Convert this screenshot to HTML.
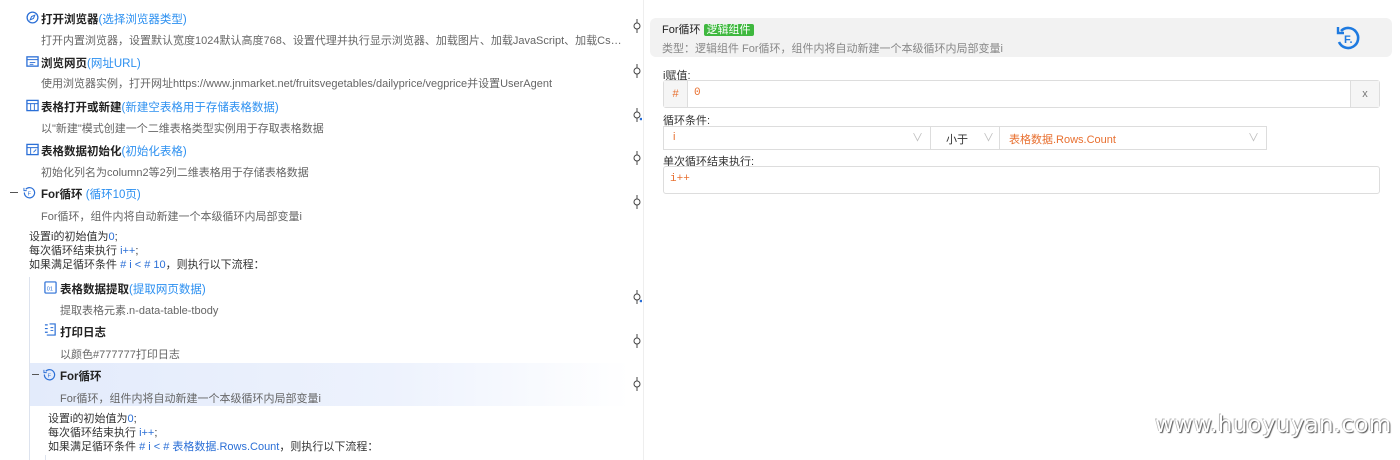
<!DOCTYPE html>
<html><head><meta charset="utf-8"><style>
*{margin:0;padding:0;box-sizing:border-box}
body{width:1400px;height:460px;overflow:hidden;background:#fff;font-family:"Liberation Sans","Noto Sans CJK SC",sans-serif;font-size:11px;color:#333;position:relative}
.a{position:absolute;white-space:nowrap}
.t{font-weight:bold;color:#222;font-size:11.5px}
.b{color:#2b8ff0;font-weight:normal}
.d{color:#666}
.bl{color:#2b6fd6}
.pin{position:absolute;left:632px;width:10px;height:14px}
.ic{position:absolute;width:13px;height:13px}
</style></head><body>
<div class="a" style="left:643px;top:0;width:1px;height:460px;background:#eee"></div>

<svg class="ic" style="left:26px;top:11px" viewBox="0 0 14 14"><circle cx="7" cy="7" r="5.8" fill="none" stroke="#2b6fd6" stroke-width="1.4"/><path d="M9.5 4.5L8 8 4.5 9.5 6 6z" fill="none" stroke="#2b6fd6" stroke-width="1.1"/></svg>
<div class="a t" style="left:41px;top:11px">打开浏览器<span class="b">(选择浏览器类型)</span></div>
<div class="a d" style="left:41px;top:32px;width:582px;overflow:hidden;text-overflow:ellipsis">打开内置浏览器，设置默认宽度1024默认高度768、设置代理并执行显示浏览器、加载图片、加载JavaScript、加载Css等图片视频等资源</div>

<svg class="ic" style="left:26px;top:55px" viewBox="0 0 14 14"><rect x="1" y="2" width="12" height="10" fill="none" stroke="#2b6fd6" stroke-width="1.4"/><path d="M1 5h12M4 8h6M4 10h4" stroke="#2b6fd6"/></svg>
<div class="a t" style="left:41px;top:55px">浏览网页<span class="b">(网址URL)</span></div>
<div class="a d" style="left:41px;top:75px">使用浏览器实例，打开网址https://www.jnmarket.net/fruitsvegetables/dailyprice/vegprice并设置UserAgent</div>

<svg class="ic" style="left:26px;top:99px" viewBox="0 0 14 14"><rect x="1" y="1.5" width="12" height="11" fill="none" stroke="#2b6fd6" stroke-width="1.4"/><path d="M1 5h12M5 5v7.5M9 5v7.5" stroke="#2b6fd6"/></svg>
<div class="a t" style="left:41px;top:99px">表格打开或新建<span class="b">(新建空表格用于存储表格数据)</span></div>
<div class="a d" style="left:41px;top:120px">以"新建"模式创建一个二维表格类型实例用于存取表格数据</div>

<svg class="ic" style="left:26px;top:143px" viewBox="0 0 14 14"><rect x="1" y="1.5" width="12" height="11" fill="none" stroke="#2b6fd6" stroke-width="1.4"/><path d="M1 5h12M5 5v7.5M8 10l3-3" stroke="#2b6fd6"/></svg>
<div class="a t" style="left:41px;top:143px">表格数据初始化<span class="b">(初始化表格)</span></div>
<div class="a d" style="left:41px;top:164px">初始化列名为column2等2列二维表格用于存储表格数据</div>

<div class="a" style="left:10px;top:192px;width:8px;height:1px;background:#555"></div>
<svg class="ic" style="left:23px;top:186px" viewBox="0 0 14 14"><path d="M3 3.5A5.5 5.5 0 1 1 1.5 7" fill="none" stroke="#2b6fd6" stroke-width="1.3"/><path d="M1 2v3h3" fill="none" stroke="#2b6fd6"/><text x="5" y="10" font-size="6" fill="#2b6fd6">F</text></svg>
<div class="a t" style="left:41px;top:186px">For循环 <span class="b">(循环10页)</span></div>
<div class="a d" style="left:41px;top:208px">For循环，组件内将自动新建一个本级循环内局部变量i</div>

<div class="a" style="left:29px;top:230px;line-height:14px;color:#333">设置i的初始值为<span class="bl">0</span>;<br>每次循环结束执行 <span class="bl">i++</span>;<br>如果满足循环条件 <span class="bl"># i &lt; # 10</span>，则执行以下流程：</div>

<div class="a" style="left:29px;top:277px;width:1px;height:183px;background:#dde3ee"></div>

<svg class="ic" style="left:44px;top:281px" viewBox="0 0 14 14"><rect x="1" y="1" width="12" height="12" rx="1" fill="none" stroke="#2b6fd6" stroke-width="1.3"/><text x="3" y="10" font-size="6" fill="#2b6fd6">01</text></svg>
<div class="a t" style="left:60px;top:281px">表格数据提取<span class="b">(提取网页数据)</span></div>
<div class="a d" style="left:60px;top:302px">提取表格元素.n-data-table-tbody</div>

<svg class="ic" style="left:44px;top:323px" viewBox="0 0 14 14"><path d="M1 2h3M1 6h3M1 10h3M3 13h9V1H6" fill="none" stroke="#2b6fd6" stroke-width="1.3"/><path d="M7 5h3M7 8h3" stroke="#2b6fd6"/></svg>
<div class="a t" style="left:60px;top:324px">打印日志</div>
<div class="a d" style="left:60px;top:346px">以颜色#777777打印日志</div>

<div class="a" style="left:30px;top:363px;width:600px;height:43px;background:linear-gradient(90deg,#e3ebfb 0%,#edf2fd 60%,#fff 100%)"></div>
<div class="a" style="left:32px;top:374px;width:7px;height:1px;background:#555"></div>
<svg class="ic" style="left:43px;top:368px" viewBox="0 0 14 14"><path d="M3 3.5A5.5 5.5 0 1 1 1.5 7" fill="none" stroke="#2b6fd6" stroke-width="1.3"/><path d="M1 2v3h3" fill="none" stroke="#2b6fd6"/><text x="5" y="10" font-size="6" fill="#2b6fd6">F</text></svg>
<div class="a t" style="left:60px;top:368px">For循环</div>
<div class="a d" style="left:60px;top:390px">For循环，组件内将自动新建一个本级循环内局部变量i</div>

<div class="a" style="left:48px;top:412px;line-height:14px;color:#333">设置i的初始值为<span class="bl">0</span>;<br>每次循环结束执行 <span class="bl">i++</span>;<br>如果满足循环条件 <span class="bl"># i &lt; # 表格数据.Rows.Count</span>，则执行以下流程：</div>
<div class="a" style="left:45px;top:455px;width:1px;height:5px;background:#dde3ee"></div>

<svg class="pin" style="top:19px" viewBox="0 0 10 14"><path d="M5 0v4M5 10v4" stroke="#444"/><circle cx="5" cy="7" r="3" fill="none" stroke="#444"/></svg>
<svg class="pin" style="top:64px" viewBox="0 0 10 14"><path d="M5 0v4M5 10v4" stroke="#444"/><circle cx="5" cy="7" r="3" fill="none" stroke="#444"/></svg>
<svg class="pin" style="top:108px" viewBox="0 0 10 14"><path d="M5 0v4M5 10v4" stroke="#444"/><circle cx="5" cy="7" r="3" fill="none" stroke="#444"/><circle cx="9" cy="11" r="1.3" fill="#2b6fd6"/></svg>
<svg class="pin" style="top:151px" viewBox="0 0 10 14"><path d="M5 0v4M5 10v4" stroke="#444"/><circle cx="5" cy="7" r="3" fill="none" stroke="#444"/></svg>
<svg class="pin" style="top:195px" viewBox="0 0 10 14"><path d="M5 0v4M5 10v4" stroke="#444"/><circle cx="5" cy="7" r="3" fill="none" stroke="#444"/></svg>
<svg class="pin" style="top:290px" viewBox="0 0 10 14"><path d="M5 0v4M5 10v4" stroke="#444"/><circle cx="5" cy="7" r="3" fill="none" stroke="#444"/><circle cx="9" cy="11" r="1.3" fill="#2b6fd6"/></svg>
<svg class="pin" style="top:334px" viewBox="0 0 10 14"><path d="M5 0v4M5 10v4" stroke="#444"/><circle cx="5" cy="7" r="3" fill="none" stroke="#444"/></svg>
<svg class="pin" style="top:377px" viewBox="0 0 10 14"><path d="M5 0v4M5 10v4" stroke="#444"/><circle cx="5" cy="7" r="3" fill="none" stroke="#444"/></svg>

<div class="a" style="left:650px;top:18px;width:742px;height:39px;background:#f2f2f2;border-radius:6px"></div>
<div class="a" style="left:662px;top:21px;color:#222">For循环 <span style="background:#3fb83f;color:#fff;padding:0 3px;border-radius:2px">逻辑组件</span></div>
<div class="a" style="left:662px;top:40px;color:#888">类型：逻辑组件 For循环，组件内将自动新建一个本级循环内局部变量i</div>
<svg class="a" style="left:1335px;top:24px" width="26" height="28" viewBox="0 0 26 28"><path d="M6 7A10 10 0 1 1 4 18" fill="none" stroke="#1e7ae0" stroke-width="2.6"/><path d="M3 3v6h6" fill="none" stroke="#1e7ae0" stroke-width="2.4"/><text x="9" y="19" font-size="11" font-weight="bold" fill="#1e7ae0" font-family="Liberation Sans">F.</text></svg>

<div class="a" style="left:663px;top:67px;color:#333">i赋值:</div>
<div class="a" style="left:663px;top:80px;width:717px;height:28px;border:1px solid #ddd;border-radius:3px;background:#fff"></div>
<div class="a" style="left:664px;top:81px;width:24px;height:26px;background:#f5f5f5;border-right:1px solid #ddd;color:#e87030;text-align:center;line-height:26px">#</div>
<div class="a" style="left:694px;top:87px;color:#e87030;font-family:'Liberation Mono',monospace">0</div>
<div class="a" style="left:1350px;top:81px;width:29px;height:26px;background:#f5f5f5;border-left:1px solid #ddd;color:#777;text-align:center;line-height:26px">x</div>

<div class="a" style="left:663px;top:112px;color:#333">循环条件:</div>
<div class="a" style="left:663px;top:126px;width:604px;height:24px;border:1px solid #ddd;background:#fff"></div>
<div class="a" style="left:930px;top:126px;width:1px;height:24px;background:#ddd"></div>
<div class="a" style="left:999px;top:126px;width:1px;height:24px;background:#ddd"></div>
<div class="a" style="left:673px;top:131px;color:#e87030">i</div>
<div class="a" style="left:912px;top:129px;color:#bbb">∨</div>
<div class="a" style="left:946px;top:131px;color:#333">小于</div>
<div class="a" style="left:983px;top:129px;color:#bbb">∨</div>
<div class="a" style="left:1009px;top:131px;color:#e87030">表格数据.Rows.Count</div>
<div class="a" style="left:1248px;top:129px;color:#bbb">∨</div>

<div class="a" style="left:663px;top:153px;color:#333">单次循环结束执行:</div>
<div class="a" style="left:663px;top:166px;width:717px;height:28px;border:1px solid #ddd;border-radius:3px;background:#fff"></div>
<div class="a" style="left:670px;top:173px;color:#e87030;font-family:'Liberation Mono',monospace">i++</div>

<div class="a" style="left:1155px;top:412px;font-size:23px;color:#fff;font-family:'DejaVu Sans',sans-serif;letter-spacing:0.3px;text-shadow:1px 1px 1px #555,-1px -1px 0 #bbb">www.huoyuyan.com</div>
</body></html>
